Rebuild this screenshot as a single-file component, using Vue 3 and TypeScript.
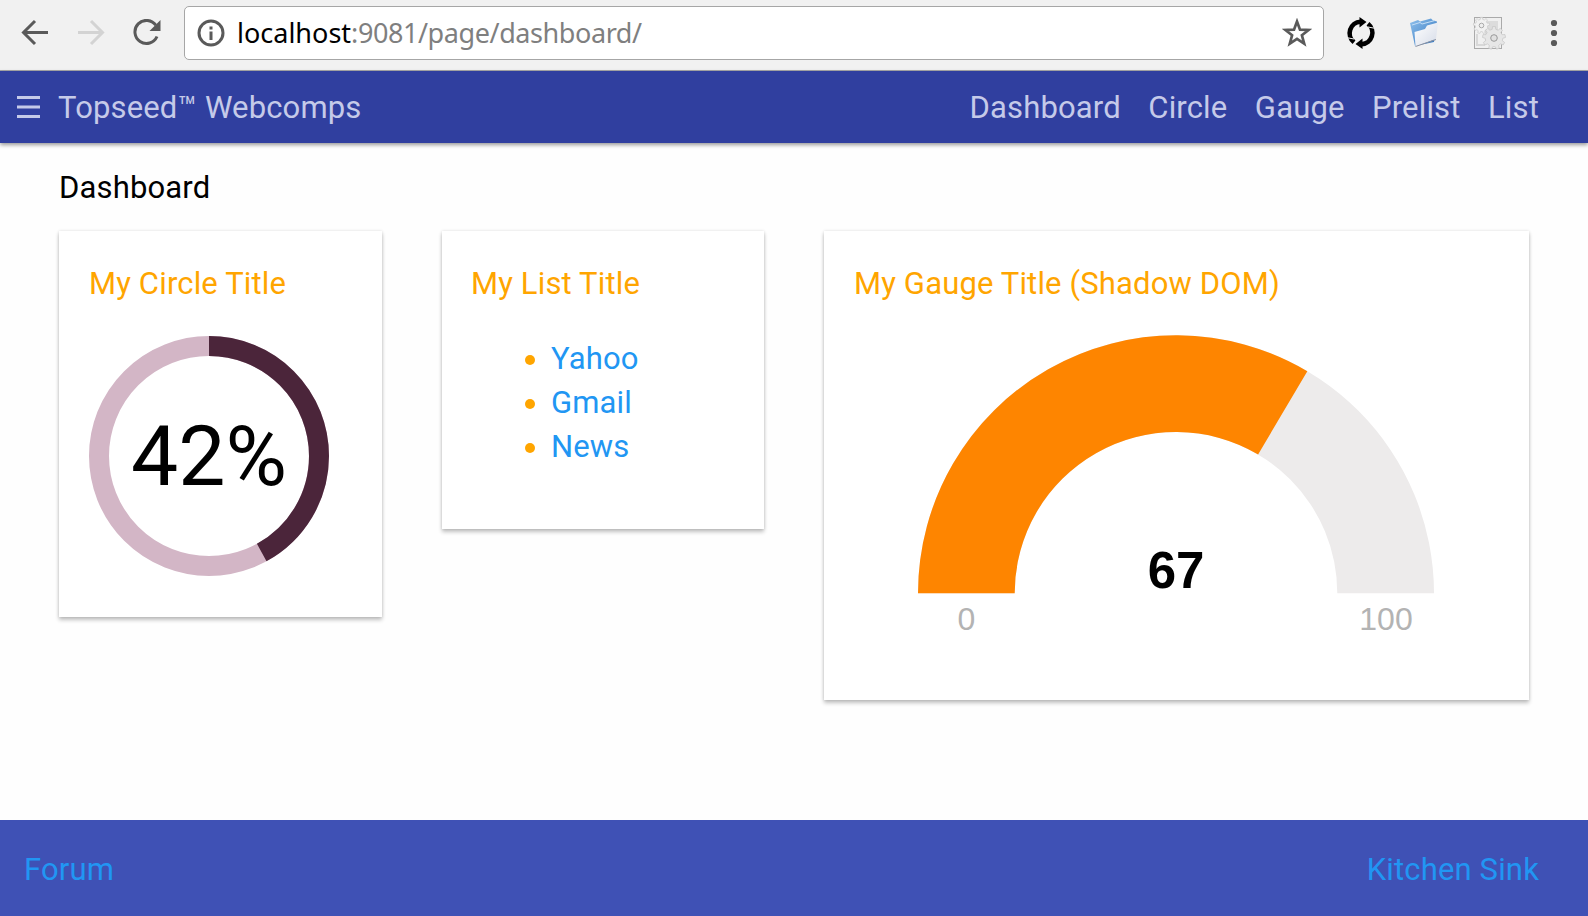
<script setup lang="ts">
interface Link {
  label: string
  href: string
}

const navLinks: Link[] = [
  { label: 'Dashboard', href: '#dashboard' },
  { label: 'Circle', href: '#circle' },
  { label: 'Gauge', href: '#gauge' },
  { label: 'Prelist', href: '#prelist' },
  { label: 'List', href: '#list' },
]
const listLinks: Link[] = [
  { label: 'Yahoo', href: '#yahoo' },
  { label: 'Gmail', href: '#gmail' },
  { label: 'News', href: '#news' },
]

const percent = 42
const gauge = 67

const ringLength = 2 * Math.PI * 110
const ringDash = `${(ringLength * percent) / 100} ${ringLength}`

// Annular sector between two fractions of the half circle, from left to right.
function sector(from: number, to: number): string {
  const R = 258
  const r = 161.3
  const p = (f: number, rad: number) => {
    const a = Math.PI * (1 - f)
    return `${258 + rad * Math.cos(a)} ${258.3 - rad * Math.sin(a)}`
  }
  return `M${p(from, R)}A${R} ${R} 0 0 1 ${p(to, R)}L${p(to, r)}A${r} ${r} 0 0 0 ${p(from, r)}Z`
}

// Outline of a cog wheel with tapered teeth.
function cog(cx: number, cy: number, inner: number, outer: number, teeth: number): string {
  const pts: string[] = []
  for (let i = 0; i < teeth; i++) {
    const shape: [number, number][] = [[-0.3, inner], [-0.18, outer], [0.18, outer], [0.3, inner]]
    for (const [off, rad] of shape) {
      const a = ((i + off) / teeth) * 2 * Math.PI
      pts.push(`${(cx + rad * Math.sin(a)).toFixed(2)} ${(cy - rad * Math.cos(a)).toFixed(2)}`)
    }
  }
  return `M${pts.join('L')}Z`
}
</script>

<template>
  <div class="window">
    <div class="toolbar">
      <svg class="back" width="28" height="28" viewBox="0 0 28 28"><path d="M27 13.500H3M14 2 2.500 13.500 14 25" fill="none" stroke="#5a5a5a" stroke-width="3" /></svg>
      <svg class="fwd" width="28" height="28" viewBox="0 0 28 28"><path d="M0 13.500H24M13 2 24.500 13.500 13 25" fill="none" stroke="#d3d3d3" stroke-width="3" /></svg>
      <svg class="reload" width="28" height="28" viewBox="0 0 28 28"><path d="M22.800 6.200A11.500 11.500 0 1 0 24 17.500" fill="none" stroke="#5a5a5a" stroke-width="3" /><path d="M27.500 1V12H16.500Z" fill="#5a5a5a" /></svg>
      <div class="omnibox">
        <svg class="info" width="28" height="28" viewBox="0 0 28 28"><circle cx="14" cy="14" r="12" fill="none" stroke="#5a5a5a" stroke-width="3" /><path d="M12.500 7.500h3v3h-3zM12.500 12.500h3v8.500h-3z" fill="#5a5a5a" /></svg>
        <div class="url"><span class="host">localhost</span><span class="path">:9081/page/dashboard/</span></div>
        <svg class="star" width="30" height="30" viewBox="0 0 30 30"><path d="M15 3.500 18 11.600 26.600 12 19.900 17.300 22.200 25.600 15 20.900 7.800 25.600 10.100 17.300 3.400 12 12 11.600Z" fill="none" stroke="#5a5a5a" stroke-width="2.700" /></svg>
      </div>
      <svg class="sync" width="32" height="32" viewBox="0 0 32 32">
        <g fill="none" stroke="#000" stroke-width="4.600"><path d="M9 25.200A11.500 11.500 0 0 1 15.500 4.700" /><path d="M23 6.800A11.500 11.500 0 0 1 16.500 27.300" /></g>
        <path d="M14.500 0 21.500 5 14.500 10.500ZM17.500 21.500 10.500 27 17.500 32Z" />
        <path d="M1 20.500l8 1.500M23 10l8 1.500" stroke="#f1f1f1" stroke-width="1" />
      </svg>
      <svg class="folder" width="32" height="32" viewBox="0 0 32 32">
        <defs>
          <linearGradient id="fb" x1="0" y1="0" x2="1" y2="1"><stop offset="0" stop-color="#8fc0ec" /><stop offset="1" stop-color="#2f73bd" /></linearGradient>
          <linearGradient id="ff" x1="0" y1="0" x2="1" y2="1"><stop offset="0" stop-color="#fff" /><stop offset="1" stop-color="#d5dbe8" /></linearGradient>
        </defs>
        <path d="M1 6 9 3 11 4.500 22 1.500 24 3.500 28 4.500 25 25 6 29Z" fill="url(#fb)" />
        <path d="M3 8 11 5.500 13 7 26 3.500" fill="none" stroke="#c4def6" />
        <path d="M5.500 15 16 12 18 8.500 29 5.500 27 22 6.500 29.500Z" fill="url(#ff)" />
        <path d="M6.500 29.500 27 22.500" stroke="#8b91a0" fill="none" />
      </svg>
      <svg class="cogs" width="34" height="34" viewBox="0 0 34 34">
        <rect x="2.500" y="1.500" width="27" height="31" fill="#f0f0f0" stroke="#aaa" />
        <rect x="13" y="5" width="13" height="20" fill="#dcdcdc" />
        <path d="M5 18v11h8" fill="none" stroke="#d8d8d8" stroke-width="2" />
        <path :d="cog(9.500, 9.500, 6.200, 8.200, 9)" fill="#f1f1f1" stroke="#c8c8c8" stroke-width="0.700" /><circle cx="9.500" cy="9.500" r="2.300" fill="#eee" stroke="#aaa" />
        <path :d="cog(22, 22, 8.800, 11.500, 9)" fill="#e6e6e6" stroke="#c4c4c4" stroke-width="0.700" /><circle cx="22" cy="22" r="3.300" fill="#e0e0e0" stroke="#999" />
      </svg>
      <svg class="menu" width="8" height="28" viewBox="0 0 8 28" fill="#5a5a5a"><circle cx="4" cy="4" r="3.100" /><circle cx="4" cy="14" r="3.100" /><circle cx="4" cy="24" r="3.100" /></svg>
    </div>

    <header class="appbar">
      <svg class="burger" width="24" height="24" viewBox="0 0 24 24"><path d="M0 2.500H23M0 12H23M0 21.500H23" stroke="#c5cae9" stroke-width="3" /></svg>
      <div class="brand">Topseed<sup>™</sup> Webcomps</div>
      <nav><a v-for="l in navLinks" :key="l.label" :href="l.href">{{ l.label }}</a></nav>
    </header>

    <main>
      <h1>Dashboard</h1>
      <div class="cards">
        <section class="card circle">
          <h2>My Circle Title</h2>
          <svg class="ring" width="240" height="240" viewBox="0 0 240 240">
            <circle cx="120" cy="120" r="110" fill="none" stroke="#d3b6c6" stroke-width="20" />
            <circle cx="120" cy="120" r="110" fill="none" stroke="#4b253a" stroke-width="20" :stroke-dasharray="ringDash" transform="rotate(-90 120 120)" />
            <text x="120" y="149" text-anchor="middle" font-size="84" letter-spacing="0">{{ percent }}%</text>
          </svg>
        </section>
        <section class="card list">
          <h2>My List Title</h2>
          <ul>
            <li v-for="l in listLinks" :key="l.label"><a :href="l.href">{{ l.label }}</a></li>
          </ul>
        </section>
        <section class="card gauge">
          <h2>My Gauge Title (Shadow DOM)</h2>
          <svg class="dial" width="516" height="310" viewBox="0 0 516 310">
            <path :d="sector(0, 1)" fill="#edebeb" />
            <path :d="sector(0, gauge / 100)" fill="#fe8500" />
            <g font-family="'Liberation Sans', Arial, sans-serif" text-anchor="middle" letter-spacing="0">
              <text x="258" y="253" font-size="51" font-weight="700" fill="#000">{{ gauge }}</text>
              <g font-size="32" fill="#b3b3b3"><text x="48.500" y="295">0</text><text x="468" y="295">100</text></g>
            </g>
          </svg>
        </section>
      </div>
    </main>

    <footer><a href="#forum">Forum</a><a href="#kitchen-sink">Kitchen Sink</a></footer>
  </div>
</template>

<style>
body { margin: 0; background: #fff; overflow: hidden; }
</style>

<style scoped>
.window { width: 1588px; height: 916px; display: flex; flex-direction: column; background: #fefefe; font-family: Roboto, sans-serif; font-size: 31px; letter-spacing: 0.15px; overflow: hidden; }
svg { display: block; flex: none; }
a { color: #2196f3; text-decoration: none; }
.toolbar { box-sizing: border-box; height: 71px; flex: none; display: flex; align-items: center; padding: 0 24px 4px 21px; background: #f1f1f1; border-bottom: 1px solid #a9a9a9; }
.fwd { margin-left: 29px; }
.reload { margin-left: 27px; }
.omnibox { box-sizing: border-box; width: 1140px; height: 54px; margin: 0 0 0 23px; border: 1px solid #a6a6a6; border-radius: 5px; background: #fff; display: flex; align-items: center; padding: 0 11px 0 12px; }
.url { flex: 1; margin-left: 12px; font-family: "Noto Sans", sans-serif; font-size: 27px; line-height: 40px; white-space: nowrap; color: #7f7f7f; letter-spacing: 0; }
.host { color: #000; }
.path { letter-spacing: -0.42px; }
.sync { margin-left: 21px; }
.folder { margin-left: 32px; }
.cogs { margin-left: 31px; }
.menu { margin-left: auto; margin-right: 6px; }
.appbar { height: 72px; flex: none; display: flex; align-items: center; padding: 0 49px 0 17px; background: #303f9f; color: #c5cae9; box-shadow: 0 2px 4px rgba(0, 0, 0, 0.4); position: relative; }
.appbar a { color: #c5cae9; }
.brand { margin-left: 17px; padding-top: 1px; line-height: 44px; }
.brand sup { font-size: inherit; vertical-align: baseline; line-height: 0; }
nav { margin-left: auto; padding-top: 1px; display: flex; gap: 27.500px; line-height: 44px; }
main { flex: 1; padding: 23px 59px 0; }
h1, h2 { margin: 0; font-size: 31px; font-weight: 400; line-height: 44px; }
h1 { color: #000; }
.cards { display: flex; align-items: flex-start; gap: 60px; margin-top: 21px; }
.card { box-sizing: border-box; padding: 31px 30px 30px; background: #fff; box-shadow: 0 3px 4px rgba(0, 0, 0, 0.24), 0 0 3px rgba(0, 0, 0, 0.12); }
.circle { width: 323px; height: 386px; }
.list { width: 322px; height: 298px; padding-left: 29px; }
.gauge { width: 705px; height: 469px; }
h2 { color: #ffa500; }
.ring { margin-top: 30px; }
ul { margin: 31px 0 0; padding: 0 0 0 80px; color: #ffa500; line-height: 44px; }
.dial { margin: 29px auto 0 63.500px; }
footer { height: 96px; flex: none; display: flex; justify-content: space-between; align-items: center; box-sizing: border-box; padding: 2px 49px 0 24px; background: #3f51b5; }
</style>
